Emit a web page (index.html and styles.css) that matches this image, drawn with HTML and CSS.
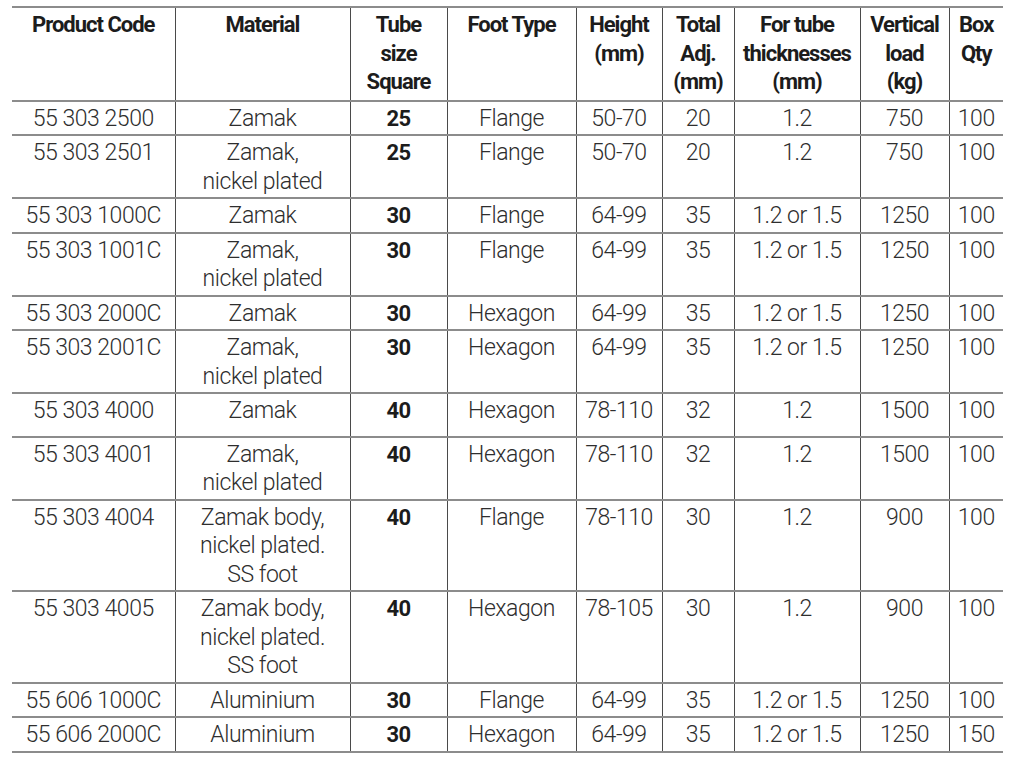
FILE: index.html
```html
<!DOCTYPE html>
<html lang="en">
<head>
<meta charset="utf-8">
<title>Adjustable feet</title>
<link rel="stylesheet" href="styles.css">
</head>
<body>
<div class="page">
<table class="spec">
  <colgroup>
    <col class="c1"><col class="c2"><col class="c3"><col class="c4"><col class="c5"><col class="c6"><col class="c7"><col class="c8"><col class="c9">
  </colgroup>
  <thead>
    <tr>
      <th>Product Code</th>
      <th>Material</th>
      <th>Tube<br>size<br>Square</th>
      <th>Foot Type</th>
      <th>Height<br>(mm)</th>
      <th>Total<br>Adj.<br>(mm)</th>
      <th>For tube<br>thicknesses<br>(mm)</th>
      <th>Vertical<br>load<br>(kg)</th>
      <th>Box<br>Qty</th>
    </tr>
  </thead>
  <tbody>
    <tr><td>55 303 2500</td><td>Zamak</td><td class="b">25</td><td>Flange</td><td>50-70</td><td>20</td><td>1.2</td><td>750</td><td>100</td></tr>
    <tr><td>55 303 2501</td><td>Zamak,<br>nickel plated</td><td class="b">25</td><td>Flange</td><td>50-70</td><td>20</td><td>1.2</td><td>750</td><td>100</td></tr>
    <tr><td>55 303 1000C</td><td>Zamak</td><td class="b">30</td><td>Flange</td><td>64-99</td><td>35</td><td>1.2 or 1.5</td><td>1250</td><td>100</td></tr>
    <tr><td>55 303 1001C</td><td>Zamak,<br>nickel plated</td><td class="b">30</td><td>Flange</td><td>64-99</td><td>35</td><td>1.2 or 1.5</td><td>1250</td><td>100</td></tr>
    <tr><td>55 303 2000C</td><td>Zamak</td><td class="b">30</td><td>Hexagon</td><td>64-99</td><td>35</td><td>1.2 or 1.5</td><td>1250</td><td>100</td></tr>
    <tr><td>55 303 2001C</td><td>Zamak,<br>nickel plated</td><td class="b">30</td><td>Hexagon</td><td>64-99</td><td>35</td><td>1.2 or 1.5</td><td>1250</td><td>100</td></tr>
    <tr class="tall"><td>55 303 4000</td><td>Zamak</td><td class="b">40</td><td>Hexagon</td><td>78-110</td><td>32</td><td>1.2</td><td>1500</td><td>100</td></tr>
    <tr><td>55 303 4001</td><td>Zamak,<br>nickel plated</td><td class="b">40</td><td>Hexagon</td><td>78-110</td><td>32</td><td>1.2</td><td>1500</td><td>100</td></tr>
    <tr><td>55 303 4004</td><td>Zamak body,<br>nickel plated.<br>SS foot</td><td class="b">40</td><td>Flange</td><td>78-110</td><td>30</td><td>1.2</td><td>900</td><td>100</td></tr>
    <tr><td>55 303 4005</td><td>Zamak body,<br>nickel plated.<br>SS foot</td><td class="b">40</td><td>Hexagon</td><td>78-105</td><td>30</td><td>1.2</td><td>900</td><td>100</td></tr>
    <tr><td>55 606 1000C</td><td>Aluminium</td><td class="b">30</td><td>Flange</td><td>64-99</td><td>35</td><td>1.2 or 1.5</td><td>1250</td><td>100</td></tr>
    <tr><td>55 606 2000C</td><td>Aluminium</td><td class="b">30</td><td>Hexagon</td><td>64-99</td><td>35</td><td>1.2 or 1.5</td><td>1250</td><td>150</td></tr>
  </tbody>
</table>
</div>
</body>
</html>
```

FILE: styles.css
```css
html, body {
  margin: 0;
  padding: 0;
  background: #ffffff;
}

.page {
  padding: 6px 9px 0 12px;
}

.spec {
  width: 991px;
  table-layout: fixed;
  border-collapse: collapse;
  font-family: Roboto, "Liberation Sans", sans-serif;
  color: #2e2e2e;
}

.c1 { width: 163px; }
.c2 { width: 175px; }
.c3 { width: 97px; }
.c4 { width: 129px; }
.c5 { width: 86px; }
.c6 { width: 72px; }
.c7 { width: 126px; }
.c8 { width: 89px; }
.c9 { width: 54px; }

.spec th,
.spec td {
  text-align: center;
  vertical-align: top;
  padding: 3px 0 1px 0;
  line-height: 28.5px;
  font-size: 23px;
  border-top: 2px solid #8c8c8c;
  border-bottom: 2px solid #8c8c8c;
  border-left: 1px solid #4a4a4a;
  border-right: 1px solid #4a4a4a;
}

.spec th:first-child,
.spec td:first-child {
  border-left: none;
}

.spec th:last-child,
.spec td:last-child {
  border-right: none;
}

.spec th {
  font-size: 22px;
  font-weight: 700;
  letter-spacing: -1px;
  color: #1c1c1c;
  padding: 3px 0 3px 0;
}

.spec td {
  font-family: "Roboto Light", Roboto, "Liberation Sans", sans-serif;
  font-weight: 300;
  letter-spacing: -0.45px;
}

.spec td.b {
  font-family: Roboto, "Liberation Sans", sans-serif;
  font-size: 22px;
  font-weight: 700;
  letter-spacing: -0.6px;
  color: #1c1c1c;
}

.spec tr.tall td {
  padding-bottom: 10px;
}
```
